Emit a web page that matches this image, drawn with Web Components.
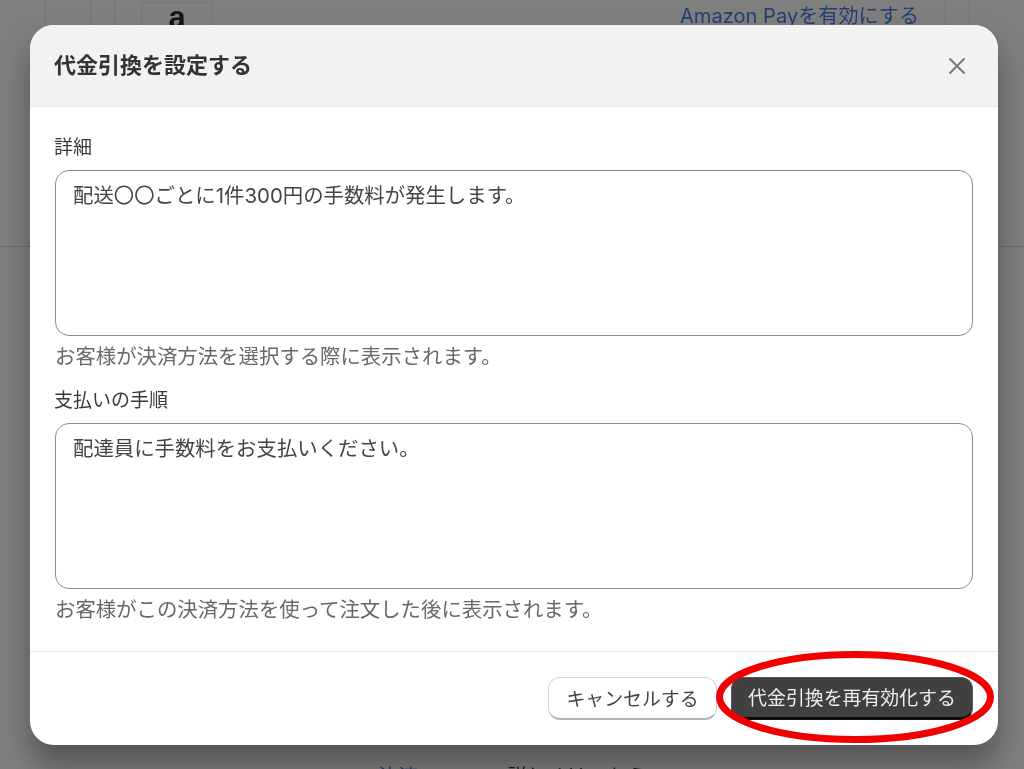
<!DOCTYPE html>
<html lang="ja">
<head>
<meta charset="utf-8">
<title>代金引換を設定する</title>
<style>
  html, body { margin: 0; height: 100%; }
  body { font-family: Inter, "Noto Sans CJK JP", sans-serif; }
</style>
</head>
<body>
<settings-page>
  <cod-modal heading="代金引換を設定する">
    <modal-field label="詳細" help="お客様が決済方法を選択する際に表示されます。">配送〇〇ごとに1件300円の手数料が発生します。</modal-field>
    <modal-field label="支払いの手順" help="お客様がこの決済方法を使って注文した後に表示されます。">配達員に手数料をお支払いください。</modal-field>
    <modal-button slot="footer">キャンセルする</modal-button>
    <modal-button slot="footer" primary>代金引換を再有効化する</modal-button>
  </cod-modal>
</settings-page>

<script>
class SettingsPage extends HTMLElement {
  constructor() {
    super();
    this.attachShadow({ mode: "open" });
    this.shadowRoot.innerHTML = `
      <style>
        :host {
          display: block;
          position: relative;
          width: 1024px;
          height: 769px;
          overflow: hidden;
          background: #7f7f7f;
          font-family: Inter, "Noto Sans CJK JP", sans-serif;
          filter: blur(0.4px);
        }
        .top {
          height: 247px;
          box-sizing: border-box;
          padding-left: 45px;
          border-bottom: 1px solid #6c6c6c;
        }
        .outer {
          height: 100%;
          padding-left: 44px;
          border-left: 1px solid #737373;
        }
        .card {
          height: 100%;
          margin-right: 54px;
          padding: 0 23px;
          border: solid #737373;
          border-width: 0 1px;
        }
        .inner {
          height: 100%;
          box-sizing: border-box;
          padding: 2px 26px 0 26px;
          border: solid #737373;
          border-width: 0 1px;
          display: flex;
          justify-content: space-between;
          align-items: flex-start;
        }
        .badge {
          width: 72px;
          height: 30px;
          box-sizing: border-box;
          border: 1px solid #767676;
          border-radius: 4px;
          text-align: center;
          font: bold 31px/29px "Liberation Sans", sans-serif;
          color: #161616;
        }
        .link { color: #23406f; font-size: 20.1px; line-height: 28px; }
        .bottom {
          position: absolute;
          left: 378px;
          top: 763px;
          display: flex;
          gap: 89px;
          font-size: 20px;
          line-height: 28px;
          white-space: nowrap;
          color: #1a1a1a;
        }
        .bottom a { color: #23406f; }
      </style>
      <div class="top">
        <div class="outer">
          <div class="card">
            <div class="inner">
              <div class="badge">a</div>
              <div class="link">Amazon Payを有効にする</div>
            </div>
          </div>
        </div>
      </div>
      <div class="bottom"><a>決済</a><span>詳しくはこちら</span></div>
      <slot></slot>
    `;
  }
}

class CodModal extends HTMLElement {
  constructor() {
    super();
    this.attachShadow({ mode: "open" });
    const heading = this.getAttribute("heading");
    this.shadowRoot.innerHTML = `
      <style>
        :host {
          position: absolute;
          left: 30px;
          top: 25px;
          width: 968px;
          height: 720px;
          display: flex;
          flex-direction: column;
          background: #fff;
          border-radius: 24px;
          overflow: hidden;
          color: #303030;
          box-shadow: 0 20px 30px rgba(0, 0, 0, 0.34);
        }
        header {
          height: 82px;
          flex: none;
          box-sizing: border-box;
          display: flex;
          align-items: center;
          justify-content: space-between;
          padding: 0 32px 6px 24px;
          background: #f2f2f2;
          border-bottom: 1px solid #e6e6e6;
        }
        h2 { margin: 0; font-size: 22px; font-weight: 700; color: #333; }
        svg { display: block; margin-top: 6px; }
        main {
          flex: 1;
          display: flex;
          flex-direction: column;
          gap: 12px;
          padding: 24px 25px 0;
        }
        footer {
          height: 94px;
          flex: none;
          box-sizing: border-box;
          display: flex;
          justify-content: flex-end;
          gap: 14px;
          padding: 25px 25px 0 0;
          border-top: 1px solid #ebebeb;
        }
      </style>
      <header>
        <h2>${heading}</h2>
        <svg width="18" height="18" viewBox="0 0 18 18" fill="none" stroke="#7a7a7a" stroke-width="2"><path d="M1.5 1.5l15 15M16.5 1.5l-15 15"/></svg>
      </header>
      <main><slot></slot></main>
      <footer><slot name="footer"></slot></footer>
    `;
  }
}

class ModalField extends HTMLElement {
  constructor() {
    super();
    this.attachShadow({ mode: "open" });
    this.shadowRoot.innerHTML = `
      <style>
        :host { display: block; font-size: 20.4px; }
        .label { line-height: 30px; padding-top: 2px; margin-bottom: -2px; margin-left: -1px; color: #3a3a3a; font-size: 19px; }
        .box {
          margin-top: 9px;
          height: 166px;
          box-sizing: border-box;
          padding: 9px 17px;
          border: 1.5px solid #8c8c8c;
          border-radius: 14px;
          line-height: 32px;
          color: #444;
        }
        .help { margin-top: 6px; line-height: 30px; color: #686868; }
      </style>
      <div class="label">${this.getAttribute("label")}</div>
      <div class="box"><slot></slot></div>
      <div class="help">${this.getAttribute("help")}</div>
    `;
  }
}

class ModalButton extends HTMLElement {
  constructor() {
    super();
    this.attachShadow({ mode: "open" });
    this.shadowRoot.innerHTML = `
      <style>
        :host {
          display: flex;
          align-items: center;
          justify-content: center;
          box-sizing: border-box;
          height: 43px;
          width: 169px;
          padding-bottom: 2px;
          font-size: 18.9px;
          color: #444;
          background: #fff;
          border: 1px solid #d4d4d4;
          border-bottom: 2px solid #b5b5b5;
          border-radius: 12px;
        }
        :host([primary]) {
          position: relative;
          width: 242px;
          color: #eee;
          background: #404040;
          border: 1px solid #555;
          border-bottom: 3px solid #0d0d0d;
        }
        svg { position: absolute; left: -16px; top: -28px; pointer-events: none; }
      </style>
      <slot></slot>
      ${this.hasAttribute("primary") ? `<svg width="278" height="94" viewBox="0 0 278 94" fill="none"><ellipse cx="139" cy="47" rx="135.5" ry="42.5" stroke="#f00000" stroke-width="7"/></svg>` : ""}
    `;
  }
}

customElements.define("settings-page", SettingsPage);
customElements.define("cod-modal", CodModal);
customElements.define("modal-field", ModalField);
customElements.define("modal-button", ModalButton);
</script>
</body>
</html>
